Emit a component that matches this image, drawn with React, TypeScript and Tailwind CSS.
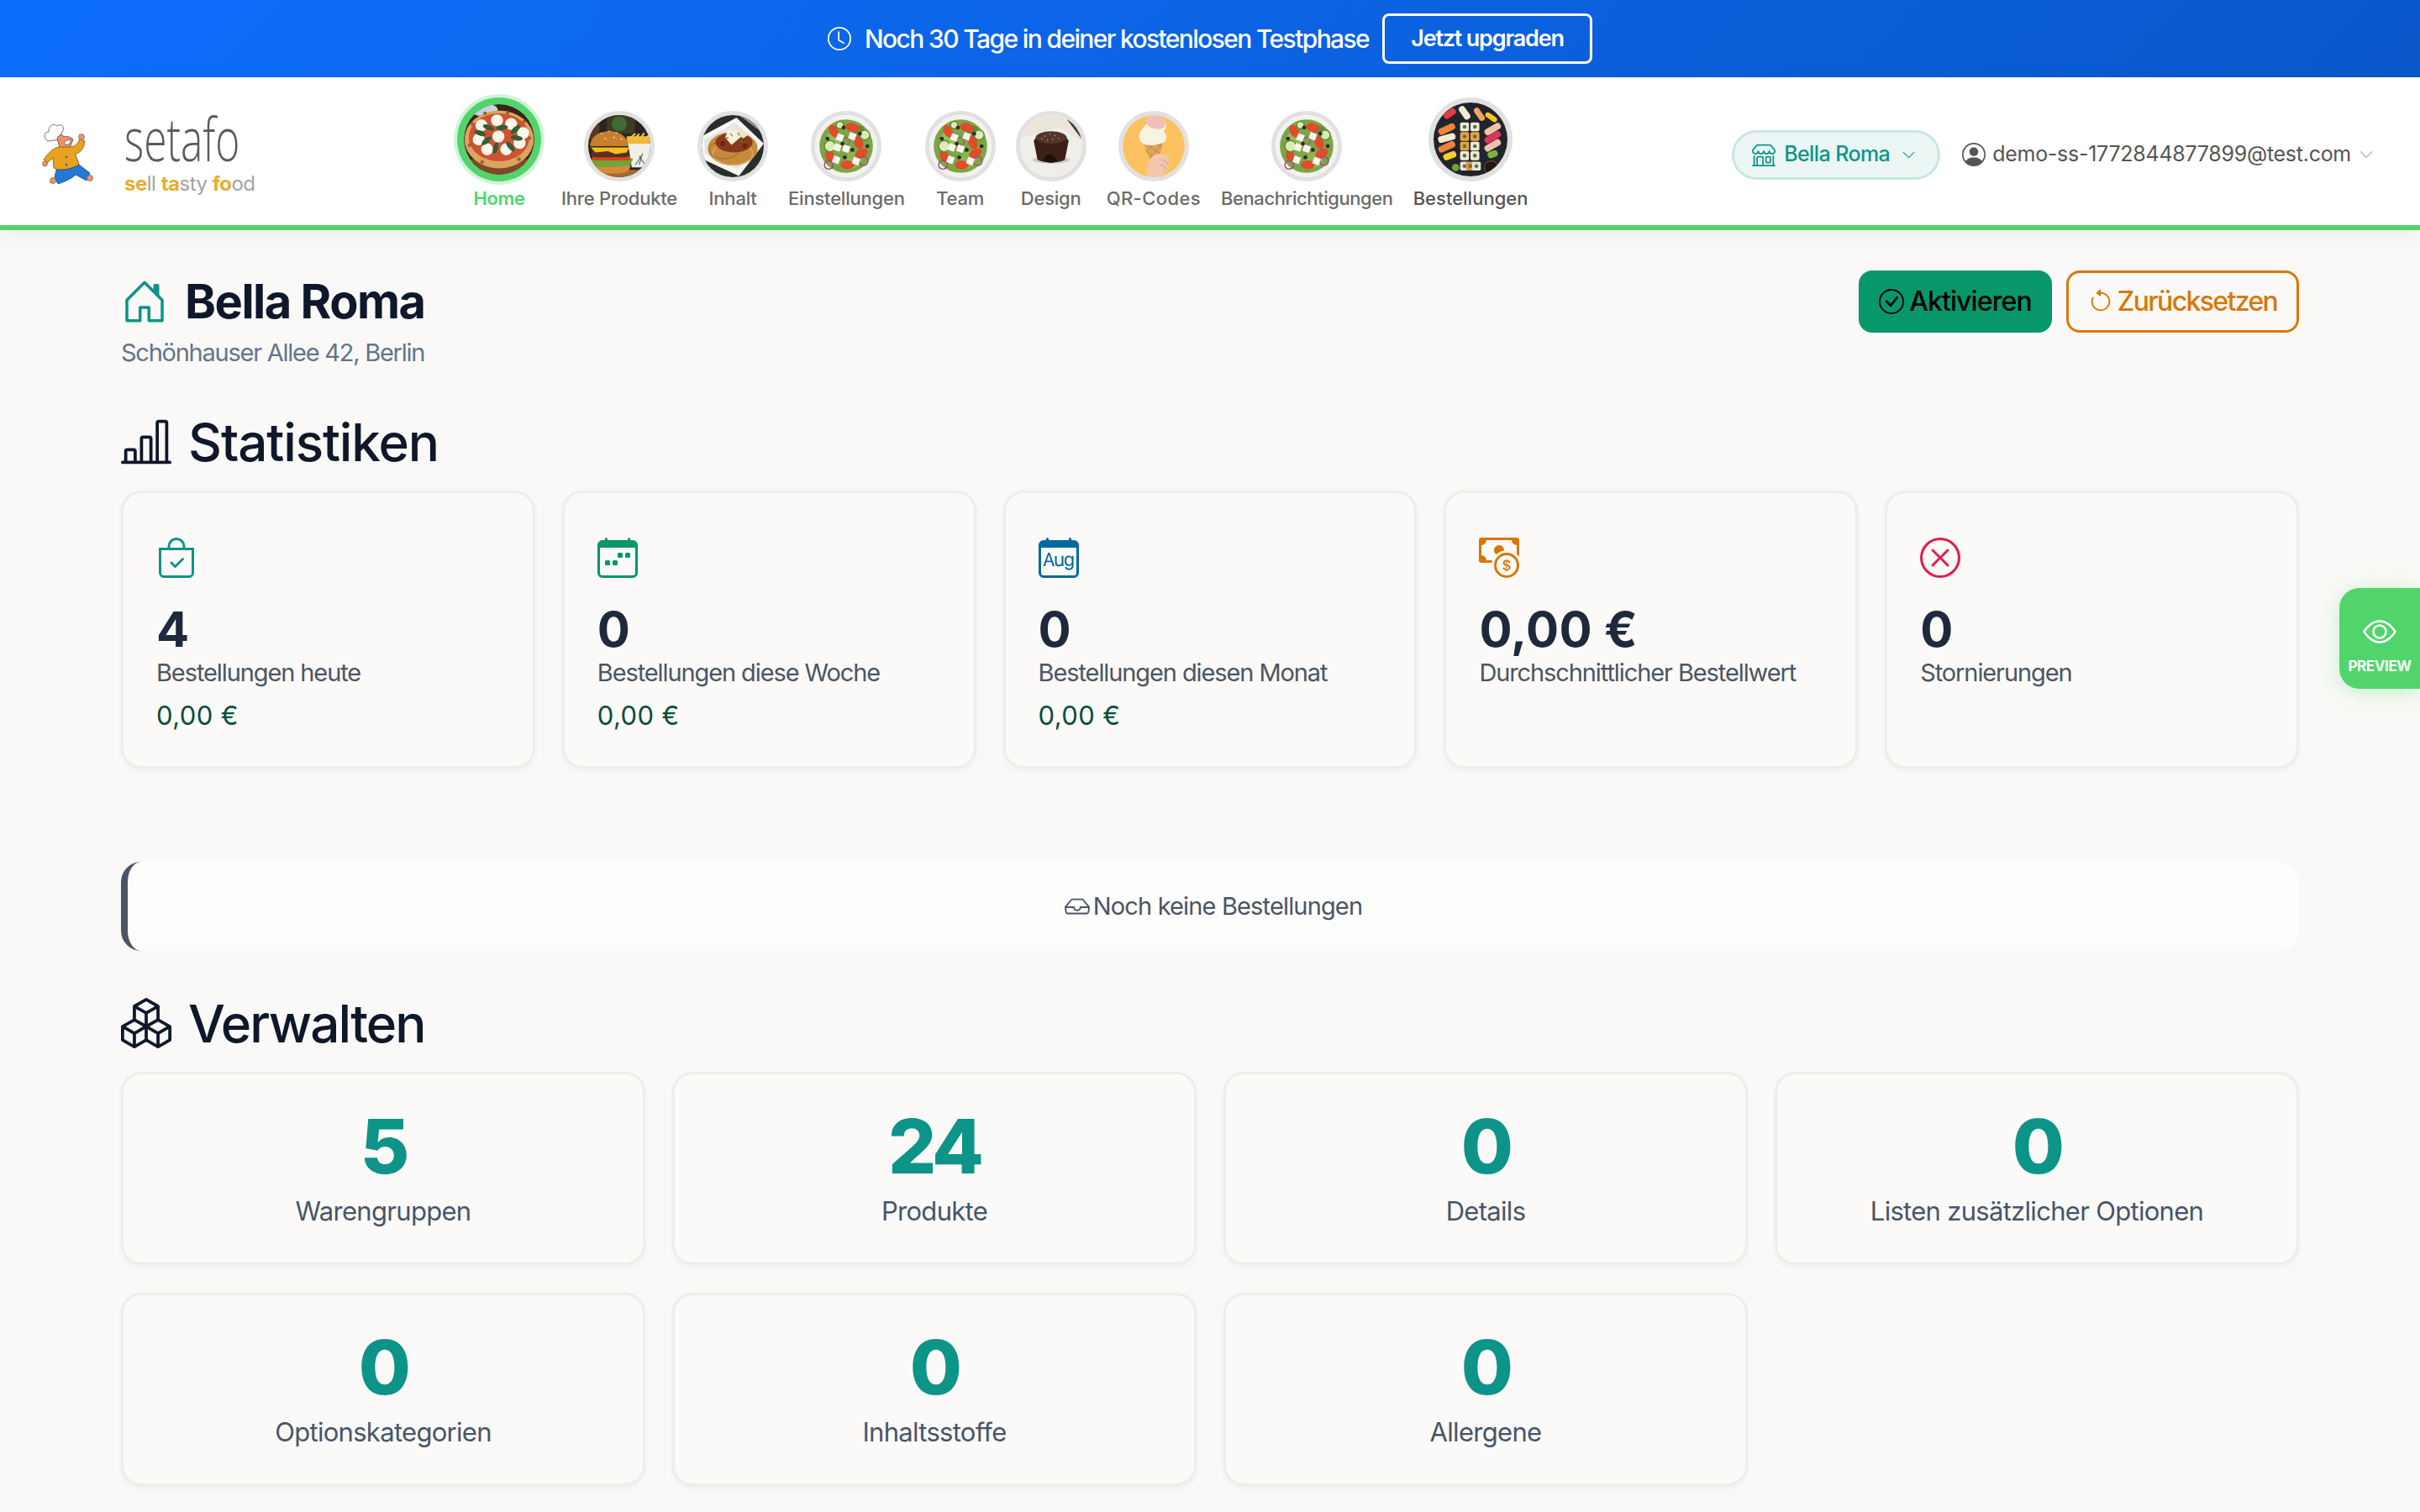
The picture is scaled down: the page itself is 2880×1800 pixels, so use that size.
import type { ReactNode } from "react";
import {
  BsArrowCounterclockwise,
  BsBagCheck,
  BsBarChartLine,
  BsBoxes,
  BsCalendarMonth,
  BsCalendarWeek,
  BsCashCoin,
  BsCheckCircle,
  BsChevronDown,
  BsClock,
  BsEye,
  BsHouseDoor,
  BsInbox,
  BsPersonCircle,
  BsShop,
  BsXCircle,
} from "react-icons/bs";

function Chef() {
  return (
    <svg viewBox="0 0 62 74" className="h-[74px] w-[62px] shrink-0">
      <path d="M7 22 C1 18 2 11 8 11 C7 4 14 0 18 4 C23 0 28 6 24 11 L20 21 C15 20 11 22 7 22Z" fill="#fff" stroke="#555" strokeWidth="0.8" />
      <path d="M18 18 L21 30 L33 30 L37 20 C33 16 28 16 27 17 L22 14Z" fill="#f0906a" stroke="#444" strokeWidth="0.8" />
      <path d="M27 22 l8 -2 l-3 6 l-5 0z" fill="#fff" stroke="#444" strokeWidth="0.6" />
      <path d="M20 29 C12 31 7 37 2 44 L6 48 L13 42 L14 54 C22 58 36 56 44 50 C43 45 40 40 40 37 C46 36 50 30 51 22 L45 19 C43 25 39 29 34 29Z" fill="#e9a11f" stroke="#7a5310" strokeWidth="0.8" />
      <circle cx="29" cy="41" r="1.2" fill="#555" />
      <circle cx="29" cy="50" r="1.2" fill="#555" />
      <path d="M17 56 C26 57 36 55 44 50 L57 60 L53 69 L40 62 C36 66 28 70 19 73 L15 65Z" fill="#2379d4" stroke="#1a4a86" strokeWidth="0.8" />
      <circle cx="47" cy="17" r="3.4" fill="#f0906a" stroke="#555" strokeWidth="0.6" />
      <circle cx="3.5" cy="49" r="3" fill="#f0906a" stroke="#555" strokeWidth="0.6" />
      <circle cx="13" cy="69" r="3.6" fill="#f0906a" stroke="#555" strokeWidth="0.6" />
      <circle cx="57" cy="66" r="3.6" fill="#f0906a" stroke="#555" strokeWidth="0.6" />
    </svg>
  );
}

function Pizza() {
  const cheese = [[25, 30], [47, 23], [67, 28], [49, 46], [21, 50], [33, 64], [60, 64], [79, 55], [84, 41]];
  const basil = [[35, 33, 20], [54, 33, -5], [73, 36, -45], [75, 48, 10], [23, 41, 20], [32, 52, -40], [45, 62, -75], [66, 60, 50]];
  return (
    <svg viewBox="0 0 100 100" className="h-full w-full">
      <rect width="100" height="100" fill="#3a2618" />
      <rect y="78" width="100" height="22" fill="#7a4c2a" />
      <ellipse cx="28" cy="8" rx="20" ry="9" fill="#c8d3e2" />
      <ellipse cx="50" cy="50" rx="49" ry="41" fill="#dca45f" />
      <ellipse cx="50" cy="47" rx="43" ry="34" fill="#cf5233" />
      {[[12, 28], [30, 13], [62, 12], [85, 25], [93, 48], [8, 58], [26, 82], [78, 78]].map(([x, y]) => (
        <circle key={`${x}-${y}`} cx={x} cy={y} r="2.6" fill="#9a6430" />
      ))}
      {cheese.map(([x, y]) => (
        <circle key={`${x}-${y}`} cx={x} cy={y} r="8.5" fill="#fdf7ea" />
      ))}
      {basil.map(([x, y, r]) => (
        <ellipse key={`${x}-${y}`} cx={x} cy={y} rx="8.5" ry="3.6" fill="#2f6038" transform={`rotate(${r} ${x} ${y})`} />
      ))}
    </svg>
  );
}

function Burger() {
  return (
    <svg viewBox="0 0 100 100" className="h-full w-full">
      <rect width="100" height="100" fill="#2b2320" />
      <rect x="30" y="0" width="45" height="30" fill="#3f3a26" />
      <ellipse cx="50" cy="14" rx="12" ry="12" fill="#3f6a33" />
      <rect x="0" y="0" width="18" height="40" fill="#5a3826" />
      <rect y="88" width="100" height="12" fill="#a36a32" />
      <rect x="62" y="34" width="38" height="14" fill="#eeb93a" />
      <path d="M66 38 l10 -8 M74 40 l8 -10 M84 38 l6 -9 M90 40 l8 -8" stroke="#f2c346" strokeWidth="3" />
      <path d="M64 46 H100 V84 H70Z" fill="#f1efe9" />
      <path d="M76 80 l12 -18 M82 80 l4 -14 M90 78 l-8 -12" stroke="#4d6a42" strokeWidth="1.5" />
      <path d="M6 82 C6 92 16 94 36 94 C58 94 68 92 68 80Z" fill="#d68a35" />
      <path d="M2 72 C14 68 56 68 72 70 L68 80 C50 84 20 84 6 82Z" fill="#6fa437" />
      <rect x="6" y="66" width="62" height="7" rx="3" fill="#d5431f" />
      <rect x="5" y="54" width="60" height="14" rx="6" fill="#58301f" />
      <path d="M4 52 H66 L62 60 L44 63 L32 58 L12 60Z" fill="#f6bc1f" />
      <path d="M3 50 C3 20 62 16 65 50Z" fill="#c77f2e" />
      <path d="M20 30 l3 -1 M32 26 l3 0 M44 28 l3 1 M26 38 l3 0 M40 36 l3 0 M52 38 l3 1" stroke="#f3dfb5" strokeWidth="1.6" />
    </svg>
  );
}

function Pasta() {
  return (
    <svg viewBox="0 0 100 100" className="h-full w-full">
      <rect width="100" height="100" fill="#2a2c2e" />
      <polygon points="60,0 100,0 100,30" fill="#8c979f" />
      <polygon points="0,34 56,4 100,46 60,98 0,70" fill="#f6f6f4" />
      <polygon points="4,40 54,12 92,46 58,88 6,62" fill="#e6e6e3" />
      <ellipse cx="50" cy="54" rx="40" ry="27" fill="#c58a3c" />
      <ellipse cx="50" cy="62" rx="32" ry="18" fill="none" stroke="#dcaa5c" strokeWidth="2" />
      <ellipse cx="36" cy="56" rx="24" ry="14" fill="none" stroke="#a86f28" strokeWidth="1.4" />
      <ellipse cx="52" cy="44" rx="30" ry="16" fill="#8a3a1c" />
      <circle cx="34" cy="46" r="4" fill="#6a2612" />
      <circle cx="70" cy="50" r="4" fill="#6a2612" />
      <polygon points="42,24 72,26 62,36 48,48 38,36" fill="#f7f0dc" />
      <polygon points="56,22 78,30 66,38" fill="#efe4c6" />
      <path d="M46 30 l4 4 M58 28 l3 5 M38 38 l5 -2 M62 42 l4 2" stroke="#4e8a32" strokeWidth="1.6" />
    </svg>
  );
}

function Salad() {
  const tomato = [[30, 26, 60], [60, 20, 15], [70, 44, 70], [24, 66, 70], [74, 62, -30], [52, 80, 0]];
  const feta = [[40, 36], [60, 34], [50, 54], [34, 72], [66, 74], [36, 52]];
  const olives = [[46, 20], [72, 30], [44, 46], [60, 56], [84, 50], [48, 68], [20, 38]];
  return (
    <svg viewBox="0 0 100 100" className="h-full w-full">
      <rect width="100" height="100" fill="#f4f2ef" />
      <circle cx="50" cy="50" r="43" fill="#7ba646" />
      <circle cx="30" cy="40" r="13" fill="#94bf5a" />
      <circle cx="70" cy="28" r="11" fill="#5e8f38" />
      <circle cx="62" cy="72" r="13" fill="#8bb74e" />
      {tomato.map(([x, y, r]) => (
        <ellipse key={`${x}-${y}`} cx={x} cy={y} rx="11" ry="7" fill="#e24a2a" transform={`rotate(${r} ${x} ${y})`} />
      ))}
      <circle cx="24" cy="50" r="9" fill="#dbecb2" stroke="#5c8b34" strokeWidth="2" />
      <circle cx="80" cy="32" r="8" fill="#dbecb2" stroke="#5c8b34" strokeWidth="2" />
      <circle cx="40" cy="16" r="6" fill="#dbecb2" stroke="#5c8b34" strokeWidth="2" />
      <circle cx="22" cy="80" r="7" fill="none" stroke="#a04a8a" strokeWidth="2" />
      <circle cx="78" cy="74" r="7" fill="none" stroke="#a04a8a" strokeWidth="2" />
      <circle cx="50" cy="42" r="6" fill="none" stroke="#a04a8a" strokeWidth="1.6" />
      {feta.map(([x, y]) => (
        <rect key={`${x}-${y}`} x={x - 5.5} y={y - 5.5} width="11" height="11" fill="#fbf7ec" transform={`rotate(20 ${x} ${y})`} />
      ))}
      {olives.map(([x, y]) => (
        <circle key={`${x}-${y}`} cx={x} cy={y} r="3.2" fill="#3a2530" />
      ))}
    </svg>
  );
}

function LavaCake() {
  return (
    <svg viewBox="0 0 100 100" className="h-full w-full">
      <rect width="100" height="100" fill="#ece5da" />
      <polygon points="70,0 100,0 100,40" fill="#3f3d3b" />
      <polygon points="0,36 62,20 100,42 100,100 0,100" fill="#efeeea" />
      <polygon points="0,100 0,74 30,100" fill="#c9c7c2" />
      <polygon points="70,100 100,74 100,100" fill="#2c2a28" />
      <ellipse cx="50" cy="72" rx="30" ry="6" fill="#cfcbc4" />
      <path d="M22 42 C26 26 74 26 78 42 L72 72 C60 78 40 78 28 72Z" fill="#3c2015" />
      <ellipse cx="50" cy="36" rx="25" ry="10" fill="#55352a" />
      <path d="M38 72 C40 62 52 58 60 74 C52 78 44 78 38 72Z" fill="#1f0d08" />
      {[[40, 34], [48, 31], [56, 33], [62, 38], [44, 40], [52, 39], [35, 38]].map(([x, y]) => (
        <circle key={`${x}-${y}`} cx={x} cy={y} r="1.1" fill="#b49a8e" />
      ))}
    </svg>
  );
}

function IceCream() {
  return (
    <svg viewBox="0 0 100 100" className="h-full w-full">
      <rect width="100" height="100" fill="#fcc262" />
      <path d="M32 42 L66 40 L58 72 L46 76Z" fill="#dfa55a" />
      <path d="M38 46 L60 62 M48 42 L64 52 M36 56 L54 74 M64 44 L44 70 M54 42 L38 60" stroke="#b97d36" strokeWidth="1" />
      <path d="M30 44 C20 30 34 22 38 14 C36 6 44 -2 56 0 C70 4 74 18 66 26 C74 34 70 46 60 46 C50 50 36 50 30 44Z" fill="#f8f2e2" />
      <path d="M38 14 C36 6 44 -2 56 0 C70 4 74 18 62 22 C54 24 44 22 38 14Z" fill="#f3bdb8" />
      <path d="M40 100 C36 84 42 68 52 64 C60 60 72 62 74 70 C76 80 68 92 62 100Z" fill="#f3c7ad" />
      <path d="M62 72 C68 72 72 76 72 80 M60 80 C66 80 70 84 68 88" stroke="#d69f85" strokeWidth="1.4" fill="none" />
    </svg>
  );
}

function Sushi() {
  const pieces = [
    [22, 15, 18, 9, -35, "#e23a4a"],
    [42, 14, 20, 9, 55, "#f6e7d3"],
    [62, 16, 20, 8, 55, "#f3a35c"],
    [18, 36, 24, 9, -25, "#f0813a"],
    [18, 48, 24, 9, -15, "#f7e6d3"],
    [18, 60, 24, 9, -25, "#f0813a"],
    [80, 36, 24, 9, -30, "#f0c0a8"],
    [80, 47, 24, 9, -30, "#dc3557"],
    [80, 58, 24, 9, -30, "#f0c0a8"],
    [22, 72, 18, 9, -20, "#f7cf2a"],
    [78, 20, 18, 7, 35, "#f2c81e"],
    [80, 70, 14, 9, -20, "#7fb33a"],
  ] as const;
  const rolls = [
    [42, 33, "#f2e8d8"], [56, 33, "#f2e8d8"], [42, 46, "#f0a040"], [56, 46, "#f0a040"],
    [42, 59, "#f0a040"], [56, 59, "#f2e8d8"], [42, 72, "#f2e8d8"], [56, 72, "#f2e8d8"],
    [42, 86, "#e7e4dd"], [50, 86, "#f08a4a"], [58, 86, "#e7e4dd"],
  ] as const;
  return (
    <svg viewBox="0 0 100 100" className="h-full w-full">
      <rect width="100" height="100" fill="#20242b" />
      {pieces.map(([x, y, w, h, r, c]) => (
        <rect key={`${x}-${y}`} x={x - w / 2} y={y - h / 2} width={w} height={h} rx="4" fill={c} transform={`rotate(${r} ${x} ${y})`} />
      ))}
      {rolls.map(([x, y, c]) => (
        <g key={`${x}-${y}`}>
          <rect x={x - 6} y={y - 6} width="12" height="12" rx="2" fill={c} />
          <circle cx={x} cy={y} r="2.6" fill="#4a7a3a" />
        </g>
      ))}
      <circle cx="30" cy="88" r="5" fill="#6fa62f" />
      <circle cx="78" cy="88" r="9" fill="#2a120d" stroke="#4e463f" strokeWidth="1.5" />
    </svg>
  );
}

const navItems = [
  { label: "Ihre Produkte", pic: <Burger />, tracking: "tracking-[-0.22px]" },
  { label: "Inhalt", pic: <Pasta />, tracking: "tracking-[-0.22px]" },
  { label: "Einstellungen", pic: <Salad />, tracking: "tracking-[-0.22px]" },
  { label: "Team", pic: <Salad />, tracking: "tracking-[-0.22px]" },
  { label: "Design", pic: <LavaCake />, tracking: "tracking-[-0.22px]" },
  { label: "QR-Codes", pic: <IceCream />, tracking: "tracking-[0.4px]" },
  { label: "Benachrichtigungen", pic: <Salad />, tracking: "tracking-[-0.42px]" },
];

function Header() {
  return (
    <header className="relative z-10 flex h-[182px] items-stretch border-b-[6px] border-[#51d56b] bg-white pl-[50px] pr-[55px] shadow-[0_6px_24px_rgba(0,0,0,0.05)]">
      <div className="flex w-[494px] shrink-0 items-start gap-[36px] pt-[40px]">
        <div className="pt-[14px]">
          <Chef />
        </div>
        <div className="flex flex-col">
          <span className="block h-[64px] w-[140px] origin-left scale-x-[0.69] whitespace-nowrap font-['Open_Sans',sans-serif] text-[72px] font-light leading-[64px] text-[#5a5a5a]">
            setafo
          </span>
          <span className="mt-[8px] whitespace-nowrap text-[24px] leading-[30px] tracking-[-0.5px] text-[#a3a3a3]">
            <b className="font-bold text-[#e8ae2c]">se</b>ll <b className="font-bold text-[#e8ae2c]">ta</b>sty{" "}
            <b className="font-bold text-[#e8ae2c]">fo</b>od
          </span>
        </div>
      </div>

      <nav className="flex items-end gap-[24px] pb-[18px]">
        <div className="flex w-[100px] flex-col items-center">
          <div className="h-[100px] w-[100px] overflow-hidden rounded-full border-[8px] border-[#51d56b] shadow-[0_0_0_4px_#d2f3d9]">
            <Pizza />
          </div>
          <span className="mt-[6px] text-[22px] font-semibold leading-[28px] tracking-[-0.4px] text-[#51d56b]">Home</span>
        </div>
        {navItems.map((item) => (
          <div key={item.label} className="flex min-w-[84px] flex-col items-center">
            <div className="h-[84px] w-[84px] overflow-hidden rounded-full border-[5px] border-[#e1e1e1]">{item.pic}</div>
            <span className={`mt-[6px] whitespace-nowrap text-[22px] font-medium leading-[28px] text-[#6b6b6b] ${item.tracking}`}>
              {item.label}
            </span>
          </div>
        ))}
        <div className="flex flex-col items-center">
          <div className="h-[100px] w-[100px] overflow-hidden rounded-full border-[6px] border-[#e1e1e1]">
            <Sushi />
          </div>
          <span className="mt-[6px] whitespace-nowrap text-[22px] font-medium leading-[28px] text-[#555]">Bestellungen</span>
        </div>
      </nav>

      <div className="ml-auto flex items-center gap-[26px] pt-[8px]">
        <button className="flex h-[59px] w-[248px] items-center rounded-full border-[3px] border-[#c7e6e3] bg-[#ebf6f4] pl-[21px] text-[#0d9488]">
          <BsShop className="h-[28px] w-[28px]" />
          <span className="ml-[10px] text-[25px] font-medium tracking-[-0.6px]">Bella Roma</span>
          <BsChevronDown className="ml-[14px] h-[17px] w-[17px]" />
        </button>
        <div className="flex items-center text-[#555]">
          <BsPersonCircle className="h-[28px] w-[28px]" />
          <span className="ml-[8px] text-[25px] tracking-[-0.27px]">demo-ss-1772844877899@test.com</span>
          <BsChevronDown className="ml-[9px] h-[18px] w-[18px] text-[#aaa]" />
        </div>
      </div>
    </header>
  );
}

const statCards = [
  { icon: <BsBagCheck className="h-[48px] w-[48px] text-[#0d9488]" />, value: "4", label: "Bestellungen heute", amount: "0,00 €" },
  { icon: <BsCalendarWeek className="h-[48px] w-[48px] text-[#059669]" />, value: "0", label: "Bestellungen diese Woche", amount: "0,00 €" },
  { icon: <BsCalendarMonth className="h-[48px] w-[48px] text-[#0369a1]" />, value: "0", label: "Bestellungen diesen Monat", amount: "0,00 €" },
  { icon: <BsCashCoin className="h-[48px] w-[48px] text-[#d97706]" />, value: "0,00 €", label: "Durchschnittlicher Bestellwert" },
  { icon: <BsXCircle className="h-[48px] w-[48px] text-[#e11d48]" />, value: "0", label: "Stornierungen" },
];

const manageCards = [
  ["5", "Warengruppen"],
  ["24", "Produkte"],
  ["0", "Details"],
  ["0", "Listen zusätzlicher Optionen"],
  ["0", "Optionskategorien"],
  ["0", "Inhaltsstoffe"],
  ["0", "Allergene"],
];

function SectionTitle({ icon, children }: { icon: ReactNode; children: ReactNode }) {
  return (
    <h2 className="flex h-[76px] items-center gap-[20px] text-[62px] font-medium tracking-[-1.15px] text-[#0f172a]">
      {icon}
      {children}
    </h2>
  );
}

export default function App() {
  return (
    <div className="relative h-[1800px] overflow-hidden bg-[#faf9f7] font-[Inter,sans-serif]">
      <div className="flex h-[92px] items-center justify-center bg-[linear-gradient(135deg,#0d6efd,#0a58ca)] text-white">
        <BsClock className="h-[28px] w-[28px]" />
        <span className="ml-[16px] text-[30px] font-medium tracking-[-1.63px]">Noch 30 Tage in deiner kostenlosen Testphase</span>
        <button className="ml-[16px] flex h-[60px] w-[250px] items-center justify-center rounded-[8px] border-[3px] border-white text-[27px] font-semibold tracking-[-1.2px]">
          Jetzt upgraden
        </button>
      </div>
      <Header />

      <main className="px-[144px] pt-[48px]">
        <div className="flex items-start justify-between">
          <div>
            <div className="flex h-[74px] items-center gap-[20px]">
              <BsHouseDoor className="h-[56px] w-[56px] text-[#0d9488]" />
              <h1 className="text-[56px] font-bold tracking-[-1.5px] text-[#0f172a]">Bella Roma</h1>
            </div>
            <p className="mt-[4px] text-[29px] leading-[40px] tracking-[-1.25px] text-[#64748b]">Schönhauser Allee 42, Berlin</p>
          </div>
          <div className="flex gap-[17px]">
            <button className="flex h-[74px] w-[230px] items-center justify-center gap-[6px] rounded-[16px] bg-[#07976a] text-[32px] font-medium tracking-[-0.9px] text-black">
              <BsCheckCircle className="h-[30px] w-[30px]" />
              Aktivieren
            </button>
            <button className="flex h-[74px] w-[277px] items-center justify-center gap-[5px] rounded-[16px] border-[3px] border-[#d97706] text-[32px] font-medium tracking-[-1.65px] text-[#d97706]">
              <BsArrowCounterclockwise className="h-[30px] w-[30px]" />
              Zurücksetzen
            </button>
          </div>
        </div>

        <div className="mt-[48px] mb-[20px]">
          <SectionTitle icon={<BsBarChartLine className="h-[60px] w-[60px]" />}>Statistiken</SectionTitle>
        </div>
        <div className="grid grid-cols-5 gap-[32px]">
          {statCards.map((card) => (
            <div
              key={card.label}
              className="h-[331px] rounded-[24px] border-[3px] border-[#efedea] bg-[#fbfaf8] pl-[39px] pt-[53px] shadow-[0_3px_6px_rgba(0,0,0,0.04)]"
            >
              {card.icon}
              <div className="mt-[29px] text-[58px] font-bold leading-[64px] tracking-[0.3px] text-[#1e293b]">{card.value}</div>
              <div className="text-[29px] leading-[40px] tracking-[-1.1px] text-[#4b5563]">{card.label}</div>
              {card.amount && <div className="mt-[11px] text-[31px] leading-[40px] tracking-[0.4px] text-[#064e3b]">{card.amount}</div>}
            </div>
          ))}
        </div>

        <div className="mt-[111px] flex h-[106px] items-center justify-center gap-[4px] rounded-[24px] border-l-[8px] border-[#4b5563] bg-[#fdfdfc] text-[29px] tracking-[-0.85px] text-[#4b5563]">
          <BsInbox className="h-[30px] w-[30px]" />
          Noch keine Bestellungen
        </div>

        <div className="mt-[48px] mb-[20px]">
          <SectionTitle icon={<BsBoxes className="h-[60px] w-[60px]" />}>
            <span className="tracking-[-1.9px]">Verwalten</span>
          </SectionTitle>
        </div>
        <div className="grid grid-cols-4 gap-x-[32px] gap-y-[33px]">
          {manageCards.map(([value, label]) => (
            <div
              key={label}
              className="flex h-[230px] flex-col items-center rounded-[24px] border-[3px] border-[#efedea] bg-[#fbfaf8] pt-[41px] shadow-[0_3px_6px_rgba(0,0,0,0.04)]"
            >
              <div className="text-[90px] font-extrabold leading-[90px] tracking-[-4px] text-[#0d9488]">{value}</div>
              <div className="mt-[10px] text-[31px] leading-[44px] tracking-[-0.7px] text-[#475569]">{label}</div>
            </div>
          ))}
        </div>
      </main>

      <div className="absolute right-0 top-[700px] flex h-[120px] w-[96px] flex-col items-center rounded-l-[24px] bg-[#51d56b] pt-[32px] text-white shadow-[0_4px_24px_rgba(81,213,107,0.3)]">
        <BsEye className="h-[40px] w-[40px]" />
        <span className="mt-[9px] text-[17px] font-bold leading-[24px] tracking-[-0.4px]">PREVIEW</span>
      </div>
    </div>
  );
}
